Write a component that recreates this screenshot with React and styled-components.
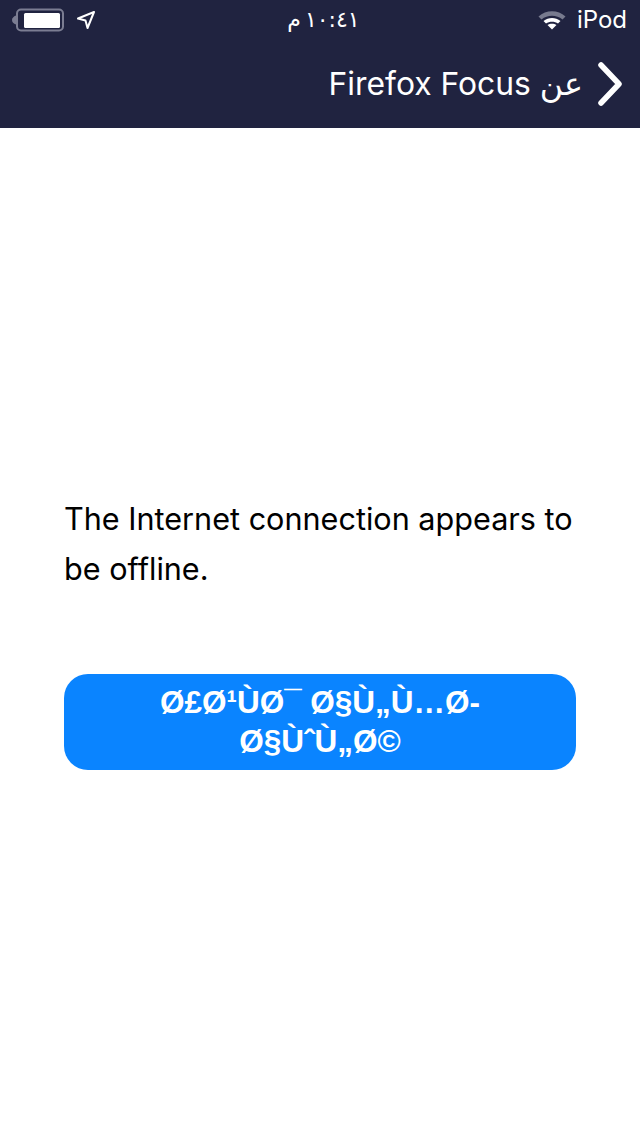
import React from "react";
import styled, { createGlobalStyle } from "styled-components";

const GlobalStyle = createGlobalStyle`
  html, body {
    margin: 0;
    padding: 0;
    background: #fff;
  }
`;

const Page = styled.div`
  width: 640px;
  height: 1136px;
  display: flex;
  flex-direction: column;
  overflow: hidden;
  font-family: Inter, "Noto Sans", "DejaVu Sans", sans-serif;
`;

const Header = styled.header`
  height: 128px;
  background: #202340;
  color: #fff;
  display: flex;
  flex-direction: column;
`;

const StatusBar = styled.div`
  height: 40px;
  display: grid;
  grid-template-columns: 1fr auto 1fr;
  align-items: center;
  padding: 0 13px 0 10px;
`;

const StatusSide = styled.div`
  display: flex;
  align-items: center;
  gap: ${(p) => p.$gap}px;
  justify-content: ${(p) => (p.$end ? "flex-end" : "flex-start")};
`;

const Clock = styled.span`
  margin-left: 10px;
  font-size: 22px;
  line-height: 40px;
  word-spacing: -3px;
  font-family: "DejaVu Sans", sans-serif;
`;

const Carrier = styled.span`
  font-size: 24px;
  line-height: 40px;
`;

const NavBar = styled.nav`
  height: 88px;
  display: flex;
  align-items: center;
  justify-content: flex-end;
  gap: 14px;
  padding: 0 17px 0 0;
`;

const NavTitle = styled.span`
  font-size: 31.8px;
  line-height: 90px;
  font-family: Inter, "DejaVu Sans", sans-serif;
`;

const Main = styled.main`
  flex: 1;
  padding: 366px 60px 0 64px;
  display: flex;
  flex-direction: column;
`;

const Message = styled.p`
  margin: 0;
  font-size: 30.6px;
  line-height: 50px;
  color: #000;
`;

const RetryButton = styled.button`
  margin: 80px 0 0;
  width: 512px;
  height: 96px;
  border: 0;
  border-radius: 24px;
  background: #0a84ff;
  color: #fff;
  padding: 0 60px;
  font-family: "Liberation Sans", Arial, sans-serif;
  font-weight: 700;
  font-size: 31.5px;
  line-height: 39px;
  text-align: center;
`;

function BatteryIcon() {
  return (
    <svg width="56" height="24" viewBox="0 0 56 24">
      <path d="M6 7.5 C3.5 8.5 2 10 2 12 C2 14 3.5 15.5 6 16.5 Z" fill="#7b7d92" />
      <rect x="7" y="1.5" width="46" height="21" rx="4" fill="none" stroke="#7b7d92" strokeWidth="2" />
      <rect x="14" y="5" width="36" height="15" rx="1.5" fill="#fff" />
    </svg>
  );
}

function LocationIcon() {
  return (
    <svg width="20" height="20" viewBox="0 0 20 20">
      <path d="M18 2 L2 8.5 L9.5 10.5 L11.5 18 Z" fill="none" stroke="#fff" strokeWidth="2" strokeLinejoin="round" />
    </svg>
  );
}

function WifiIcon() {
  return (
    <svg width="30" height="22" viewBox="0 0 30 22">
      <path d="M1.5 7.5 C9 0.5 21 0.5 28.5 7.5 L25.5 10.5 C19.5 5.5 10.5 5.5 4.5 10.5 Z" fill="#777a8e" />
      <path d="M6.5 12 C11.5 8 18.5 8 23.5 12 L21 14.5 C17.5 12 12.5 12 9 14.5 Z" fill="#fff" />
      <path d="M10.5 16 C13 14.2 17 14.2 19.5 16 L15 20.5 Z" fill="#fff" />
    </svg>
  );
}

function ChevronIcon() {
  return (
    <svg width="26" height="44" viewBox="0 0 26 44">
      <path d="M4 3 L22 22 L4 41" fill="none" stroke="#fff" strokeWidth="5.5" strokeLinecap="round" strokeLinejoin="round" />
    </svg>
  );
}

export default function App() {
  return (
    <>
      <GlobalStyle />
      <Page>
        <Header>
          <StatusBar>
            <StatusSide $gap={10}>
              <BatteryIcon />
              <LocationIcon />
            </StatusSide>
            <Clock dir="rtl">١٠:٤١ م</Clock>
            <StatusSide $gap={10} $end>
              <WifiIcon />
              <Carrier>iPod</Carrier>
            </StatusSide>
          </StatusBar>
          <NavBar>
            <NavTitle dir="rtl">عن Firefox Focus</NavTitle>
            <ChevronIcon />
          </NavBar>
        </Header>
        <Main>
          <Message>The Internet connection appears to be offline.</Message>
          <RetryButton>{"Ø£Ø¹ÙØ¯ Ø§Ù„Ù…Ø\u00ADØ§ÙˆÙ„Ø©"}</RetryButton>
        </Main>
      </Page>
    </>
  );
}
